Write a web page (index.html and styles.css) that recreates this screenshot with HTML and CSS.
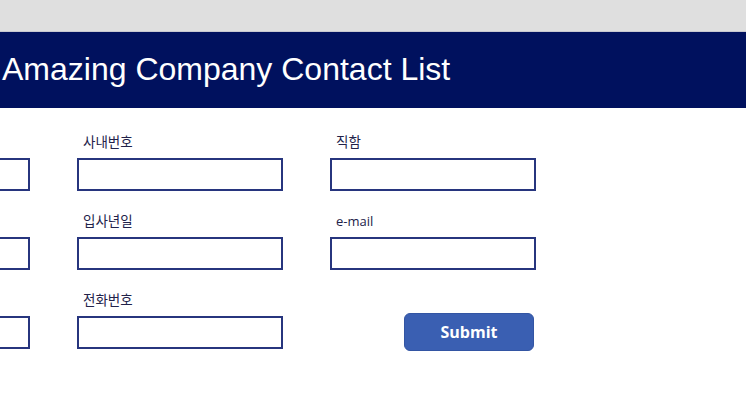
FILE: index.html
```html
<!DOCTYPE html>
<html lang="ko">
<head>
<meta charset="utf-8">
<title>Amazing Company Contact List</title>
<link rel="stylesheet" href="styles.css">
</head>
<body>
<div class="topbar"></div>
<header class="header"><h1 class="title">Amazing Company Contact List</h1></header>
<main class="form">
  <div class="field"><span class="label"></span><input class="input" type="text"></div>
  <div class="field"><label class="label label-ko">사내번호</label><input class="input" type="text"></div>
  <div class="field"><label class="label label-ko">직함</label><input class="input" type="text"></div>
  <div class="field"><span class="label"></span><input class="input" type="text"></div>
  <div class="field"><label class="label label-ko">입사년일</label><input class="input" type="text"></div>
  <div class="field"><label class="label">e-mail</label><input class="input" type="text"></div>
  <div class="field"><span class="label"></span><input class="input" type="text"></div>
  <div class="field"><label class="label label-ko">전화번호</label><input class="input" type="text"></div>
  <div class="field field-submit"><button class="submit" type="button">Submit</button></div>
</main>
</body>
</html>
```
FILE: styles.css
```css
html, body {
  margin: 0;
  padding: 0;
  background: #ffffff;
  overflow: hidden;
}
body {
  width: 746px;
  height: 413px;
  font-family: "Open Sans", "Noto Sans CJK KR", sans-serif;
}
.topbar {
  height: 31px;
  background: #dfdfdf;
  border-bottom: 1px solid #c8c8d0;
}
.header {
  height: 76px;
  background: #00115e;
  display: flex;
  align-items: center;
  padding-left: 2px;
}
.title {
  margin: 0;
  font-family: "Liberation Sans", Arial, sans-serif;
  font-weight: normal;
  font-size: 32px;
  color: #ffffff;
  line-height: 1;
  padding-bottom: 2px;
}
.form {
  display: grid;
  grid-template-columns: 206px 206px 206px;
  column-gap: 47px;
  row-gap: 22px;
  margin-left: -176px;
  padding-top: 26px;
}
.field {
  display: flex;
  flex-direction: column;
}
.label {
  display: block;
  box-sizing: border-box;
  font-family: "Open Sans", "Noto Sans CJK KR", sans-serif;
  font-size: 13px;
  line-height: 17px;
  height: 18px;
  overflow: visible;
  color: #22224a;
  padding-left: 6px;
  margin-bottom: 6px;
}
.label-ko {
  font-family: "Noto Sans CJK KR", sans-serif;
  font-size: 13.5px;
  line-height: 14px;
}
.input {
  box-sizing: border-box;
  width: 206px;
  height: 33px;
  flex: none;
  margin: 0;
  border: 2px solid #27357e;
  background: #ffffff;
  padding: 0 6px;
}
.field-submit {
  justify-content: flex-end;
}
.submit {
  box-sizing: border-box;
  margin-left: 74px;
  margin-bottom: -2px;
  width: 130px;
  height: 38px;
  background: #3a5fb2;
  border: 1px solid #3355a3;
  border-radius: 6px;
  color: #ffffff;
  font-family: "Open Sans", sans-serif;
  font-weight: 700;
  font-size: 16px;
  padding: 0;
}
```
